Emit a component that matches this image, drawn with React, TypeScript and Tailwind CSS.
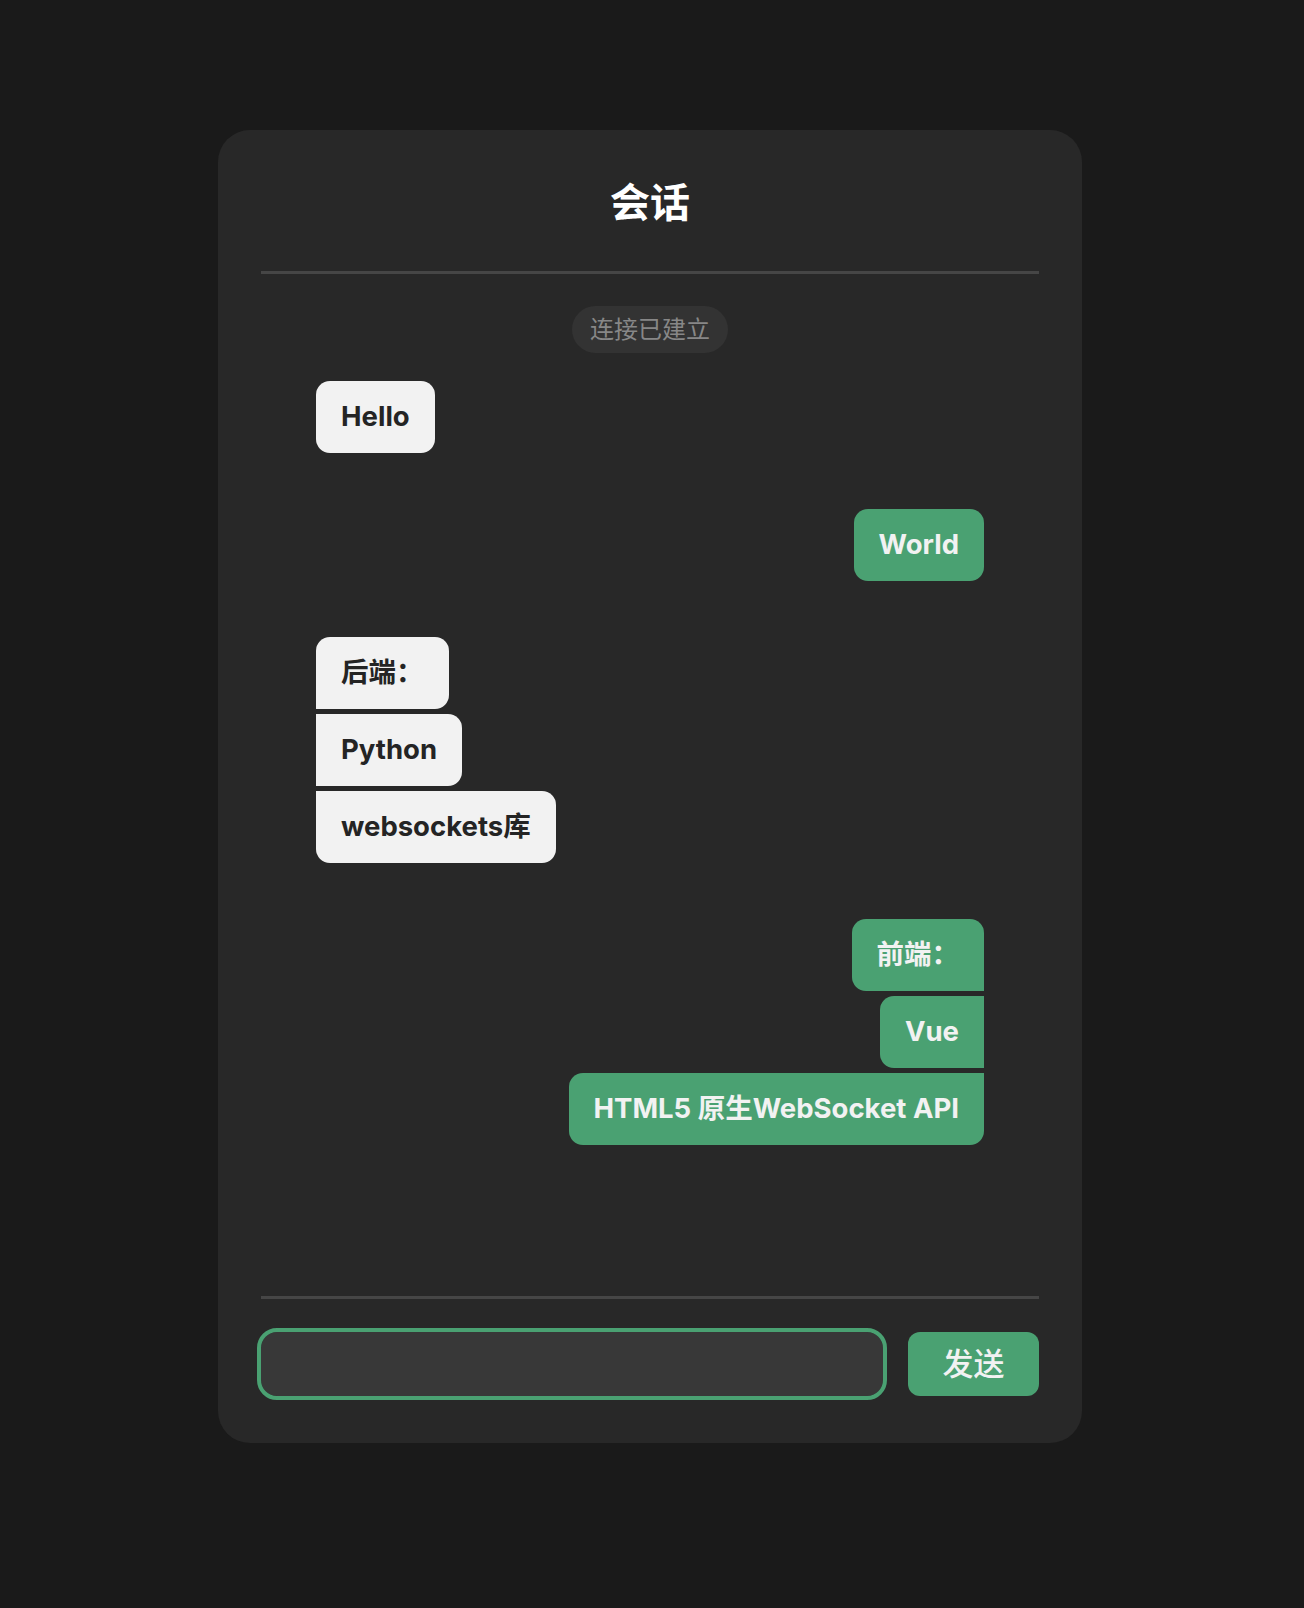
import { useState } from "react";

type Msg = { side: "left" | "right"; lines: string[] };

const messages: Msg[] = [
  { side: "left", lines: ["Hello"] },
  { side: "right", lines: ["World"] },
  { side: "left", lines: ["后端：", "Python", "websockets库"] },
  { side: "right", lines: ["前端：", "Vue", "HTML5 原生WebSocket API"] },
];

// corner shapes for grouped bubbles
function corners(side: "left" | "right", i: number, n: number) {
  if (n === 1) return "rounded-[14px]";
  if (side === "left") {
    if (i === 0) return "rounded-t-[14px] rounded-br-[14px]";
    if (i === n - 1) return "rounded-b-[14px] rounded-tr-[14px]";
    return "rounded-r-[14px]";
  }
  if (i === 0) return "rounded-t-[14px] rounded-bl-[14px]";
  if (i === n - 1) return "rounded-b-[14px] rounded-tl-[14px]";
  return "rounded-l-[14px]";
}

function Group({ msg }: { msg: Msg }) {
  const left = msg.side === "left";
  return (
    <div className={`flex flex-col gap-[5px] ${left ? "items-start" : "items-end"}`}>
      {msg.lines.map((line, i) => (
        <div
          key={i}
          className={`h-[72px] px-[25px] flex items-center text-[27.5px] font-bold whitespace-nowrap ${
            left ? "bg-[#f2f2f2] text-[#242424]" : "bg-[#4aa172] text-[#f2f2f2]"
          } ${corners(msg.side, i, msg.lines.length)}`}
        >
          {line}
        </div>
      ))}
    </div>
  );
}

export default function App() {
  const [text, setText] = useState("");

  return (
    <main
      className="min-h-[1608px] bg-[#1a1a1a] pt-[130px] pr-[4px]"
      style={{ fontFamily: '"Inter", "Noto Sans CJK SC", sans-serif' }}
    >
      <div className="mx-auto w-[864px] h-[1313px] bg-[#282828] rounded-[32px] px-[43px] flex flex-col">
        {/* header */}
        <div className="h-[144px] shrink-0 border-b-[3px] border-[#464646] flex items-center justify-center pt-[4px]">
          <h1 className="text-[40px] font-bold text-white">会话</h1>
        </div>

        {/* message list */}
        <div className="flex-1 px-[55px] pt-[32px] flex flex-col">
          <div className="self-center h-[47px] px-[18px] rounded-full bg-[#333333] text-[#878787] text-[24px] flex items-center">
            连接已建立
          </div>
          <div className="mt-[28px] flex flex-col gap-[56px]">
            {messages.map((m, i) => (
              <Group key={i} msg={m} />
            ))}
          </div>
        </div>

        {/* input bar */}
        <div className="h-[147px] shrink-0 border-t-[3px] border-[#464646] pt-[33px] flex items-start gap-[25px]">
          <input
            value={text}
            onChange={(e) => setText(e.target.value)}
            className="flex-1 h-[64px] rounded-[16px] bg-[#383838] outline-[4px] outline-solid outline-[#4aa172] text-white text-[24px] px-4"
          />
          <button className="w-[131px] h-[64px] rounded-[12px] bg-[#4aa172] text-[#f2f2f2] text-[31px] font-medium">
            发送
          </button>
        </div>
      </div>
    </main>
  );
}
